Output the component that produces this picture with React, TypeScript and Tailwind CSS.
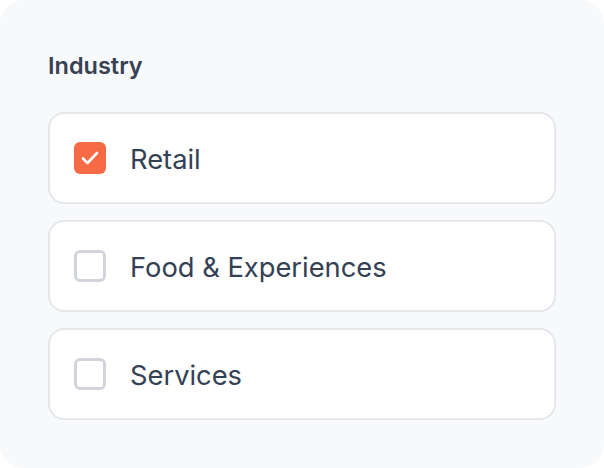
import React, { useState } from "react";

const options = ["Retail", "Food & Experiences", "Services"];

export default function App() {
  const [checked, setChecked] = useState<Record<string, boolean>>({ Retail: true });
  return (
    <div className="w-[604px] h-[468px] bg-white" style={{ fontFamily: "Inter, 'Noto Sans', sans-serif" }}>
      <div className="w-full h-full bg-[#f8f9fb] rounded-3xl px-12 pt-12 pb-12 flex flex-col">
        <div className="text-[23.5px] leading-8 font-semibold text-[#374151] mt-[2px] mb-[30px]">Industry</div>
        <div className="flex flex-col gap-4">
          {options.map((o) => {
            const on = !!checked[o];
            return (
              <button
                key={o}
                onClick={() => setChecked({ ...checked, [o]: !on })}
                className="h-[92px] bg-white border-2 border-[#e5e7eb] rounded-2xl flex items-center px-6 gap-6 text-left"
              >
                {on ? (
                  <span className="w-8 h-8 rounded-md bg-[#f76a46] flex items-center justify-center">
                    <svg width="20" height="20" viewBox="0 0 20 20" fill="none" stroke="white" strokeWidth="2.6" strokeLinecap="round" strokeLinejoin="round">
                      <polyline points="3 10.5 7.5 15 17 5" />
                    </svg>
                  </span>
                ) : (
                  <span className="w-8 h-8 rounded-md border-[3px] border-[#d1d5db] bg-white" />
                )}
                <span className="text-[27.3px] leading-8 pt-1 text-[#334155]">{o}</span>
              </button>
            );
          })}
        </div>
      </div>
    </div>
  );
}
